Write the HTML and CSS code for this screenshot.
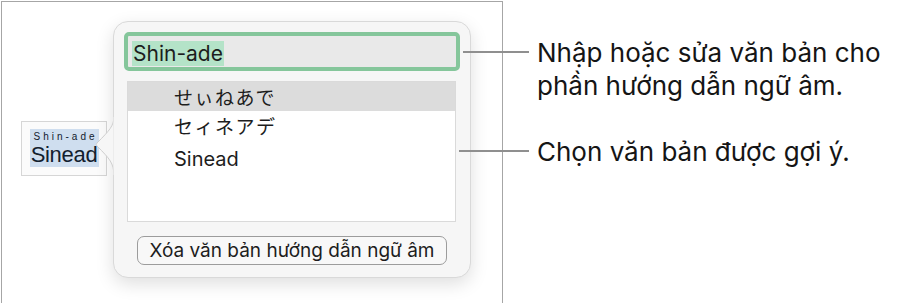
FILE: index.html
```html
<!DOCTYPE html>
<html lang="vi">
<head>
  <meta charset="UTF-8">
  <meta name="viewport" content="width=device-width, initial-scale=1.0">
  <title>Hướng dẫn ngữ âm</title>

  <link rel="stylesheet" href="styles.css">
</head>
<body>
  <div class="scene">
    <div class="frame">
      <div class="word">
        <div class="word-mark">
          <div class="ruby">Shin-ade</div>
          <div class="base">Sinead</div>
        </div>
      </div>
      <div class="popover">
        <svg class="arrow" width="20" height="58" viewBox="0 0 20 58">
          <path d="M19 0 C18.5 9 15 13 2 26 Q0.5 27.5 2 29 C15 42 18.5 46 19 58 Z" fill="#f6f6f6" stroke="#cfcfcf" stroke-width="1"/>
          <rect x="18.5" y="0" width="2" height="58" fill="#f6f6f6"/>
        </svg>
        <div class="field">
          <span class="selected">Shin-ade</span>
        </div>
        <div class="list">
          <div class="row active">せぃねあで</div>
          <div class="row">セィネアデ</div>
          <div class="row latin">Sinead</div>
        </div>
        <div class="actions">
          <button class="clear">Xóa văn bản hướng dẫn ngữ âm</button>
        </div>
      </div>
    </div>
    <div class="notes">
      <p class="note note-edit">Nhập hoặc sửa văn bản cho<br>phần hướng dẫn ngữ âm.</p>
      <p class="note note-pick">Chọn văn bản được gợi ý.</p>
    </div>
  </div>
</body>
</html>
```

FILE: styles.css
```css
body {
    margin: 0;
    background-color: #fff;
    font-family: Inter, "Noto Sans", "Noto Sans CJK JP", sans-serif;
    color: #1d1d1d;
    overflow: hidden;
}
.scene {
    display: flex;
    align-items: flex-start;
}
.frame {
    display: flex;
    align-items: flex-start;
    width: 500px;
    height: 330px;
    margin: 1px 0 0 1px;
    border: 1px solid #a6a6a6;
    border-bottom: none;
}
.word {
    width: 86px;
    height: 55px;
    margin: 119px 0 0 19px;
    border: 1px solid #d6d6d6;
    background-color: #fbfbfb;
    display: flex;
    justify-content: center;
    padding-top: 7px;
    box-sizing: border-box;
}
.word-mark {
    width: 69px;
    height: 38px;
    background-color: #cfdeef;
    text-align: center;
    font-family: "Liberation Sans", Arial, sans-serif;
    color: #12202e;
}
.ruby {
    font-size: 10px;
    letter-spacing: 3px;
    line-height: 13px;
    padding: 1px 0 0 3px;
}
.base {
    font-size: 22px;
    line-height: 23px;
    letter-spacing: -0.3px;
}
.popover {
    position: relative;
    width: 358px;
    height: 257px;
    margin: 19px 0 0 6px;
    box-sizing: border-box;
    padding: 10px 10px 0 10px;
    background-color: #f6f6f6;
    border: 1px solid #d9d9d9;
    border-radius: 15px;
    box-shadow: 0 6px 18px rgba(0, 0, 0, 0.13);
}
.arrow {
    position: absolute;
    left: -19px;
    top: 95px;
}
.field {
    height: 39px;
    box-sizing: border-box;
    border: 4px solid #85c69b;
    border-radius: 5px;
    background-color: #e9e9e9;
    padding: 4px 0 0 4px;
    font-size: 21px;
    line-height: 27px;
}
.selected {
    background-color: #b4e3c8;
    padding: 0 1px 0 1px;
}
.list {
    margin: 10px 4px 0 3px;
    height: 141px;
    box-sizing: border-box;
    border: 1px solid #dadada;
    background-color: #fff;
}
.row {
    height: 31px;
    line-height: 30px;
    padding-left: 46px;
    font-size: 19px;
    font-family: "Noto Sans CJK JP", sans-serif;
    letter-spacing: 1.5px;
}
.row.active {
    height: 29px;
    background-color: #dcdcdc;
}
.row.latin {
    font-family: Inter, sans-serif;
    font-size: 20px;
    line-height: 34px;
    letter-spacing: 0;
}
.actions {
    display: flex;
    justify-content: center;
    margin-top: 14px;
}
.clear {
    width: 310px;
    height: 29px;
    padding: 0;
    font-family: Inter, sans-serif;
    font-size: 19px;
    color: #1d1d1d;
    background-color: #f8f8f8;
    border: 1px solid #9c9c9c;
    border-radius: 7px;
}
.notes {
    margin-left: 34px;
}
.note {
    position: relative;
    margin: 0;
    font-size: 26px;
    line-height: 33px;
    color: #151515;
}
.note::before {
    content: "";
    position: absolute;
    top: 15px;
    height: 2px;
    background-color: #8f8f8f;
}
.note-edit {
    margin-top: 36px;
}
.note-edit::before {
    left: -74px;
    width: 66px;
}
.note-pick {
    margin-top: 33px;
}
.note-pick::before {
    left: -78px;
    width: 70px;
}
```
